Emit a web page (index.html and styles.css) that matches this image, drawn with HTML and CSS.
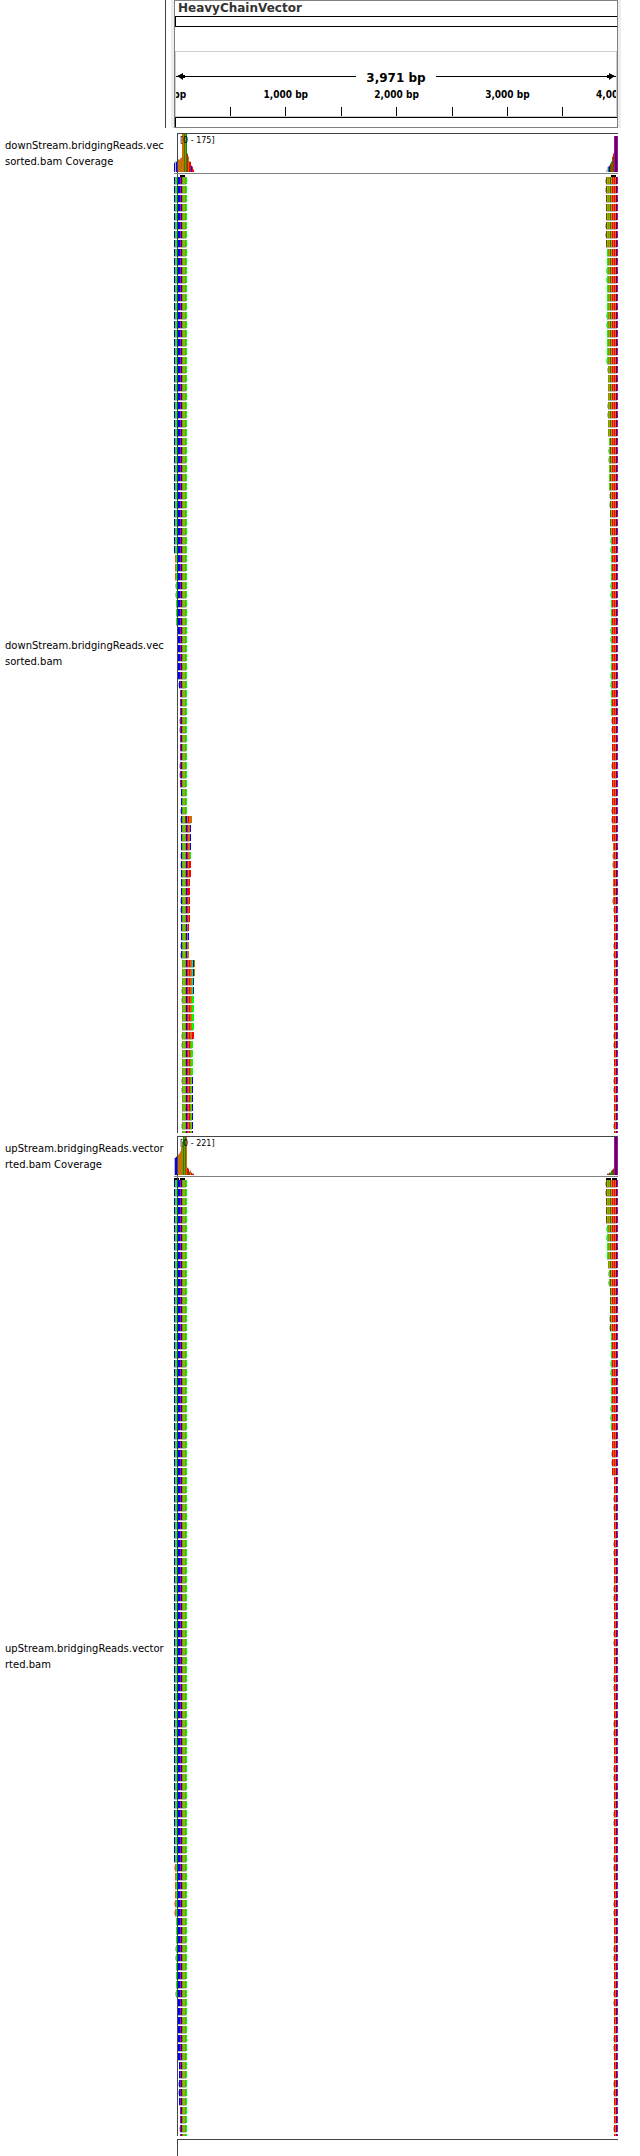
FILE: index.html
```html
<!DOCTYPE html>
<html lang="en">
<head>
<meta charset="utf-8">
<title>HeavyChainVector</title>
<link rel="stylesheet" href="styles.css">
</head>
<body>
<main class="viewer">
  <header class="row header">
    <div class="names divider"></div>
    <section class="locus">
      <h1 class="title">HeavyChainVector</h1>
      <div class="ideogram"></div>
      <div class="ruler">
        <div class="span"><svg class="tip" viewBox="0 0 10 7"><path d="M0 3h10v1H0zM1 3l6-3v2h2v3H7v2z"/></svg><i></i><span>3,971 bp</span><i></i><svg class="tip flip" viewBox="0 0 10 7"><path d="M0 3h10v1H0zM1 3l6-3v2h2v3H7v2z"/></svg></div>
        <div class="scale" id="scale"></div>
      </div>
      <div class="sequence"></div>
    </section>
  </header>
  <section class="row coverage">
    <p class="names">downStream.bridgingReads.vec<br>sorted.bam Coverage</p>
    <div class="plot"><svg class="left" data-cover="downLeft"></svg><span class="range">[0 - 175]</span><svg class="right" data-cover="downRight"></svg></div>
  </section>
  <section class="row reads">
    <p class="names">downStream.bridgingReads.vec<br>sorted.bam</p>
    <div class="plot"><svg class="left" data-reads="downLeft"></svg><svg class="right" data-reads="downRight"></svg></div>
  </section>
  <section class="row coverage">
    <p class="names">upStream.bridgingReads.vector<br>rted.bam Coverage</p>
    <div class="plot"><svg class="left" data-cover="upLeft"></svg><span class="range">[0 - 221]</span><svg class="right" data-cover="upRight"></svg></div>
  </section>
  <section class="row reads">
    <p class="names">upStream.bridgingReads.vector<br>rted.bam</p>
    <div class="plot"><svg class="left" data-reads="upLeft"></svg><svg class="right" data-reads="upRight"></svg></div>
  </section>
  <section class="row footer">
    <div class="names"></div>
    <div class="plot"></div>
  </section>
</main>
<script src="tracks.js"></script>
</body>
</html>
```
FILE: styles.css
```css
body { margin: 0; background: #fff; color: #000; font: 10px/16px "DejaVu Sans", sans-serif; }
.row { display: grid; grid-template-columns: 174px minmax(0, 1fr); padding-right: 22px; }
.names { margin: 0; padding-left: 5px; align-self: center; white-space: nowrap; }
.header { margin-bottom: 5px; padding-right: 19px; }
.divider { align-self: stretch; margin-left: 165px; padding: 0; border-left: 1px solid #444; border-right: 3px solid #eee; }
.locus { display: flex; flex-direction: column; border: 1px solid #808080; box-shadow: 3px 0 #eee; margin-right: 3px; }
.title { margin: 0; padding-left: 3px; height: 15px; font-size: 12px; line-height: 15px; font-weight: bold; color: #333; }
.ideogram { height: 9px; border: solid #000; border-width: 1px 0 1px 1px; }
.ruler { margin-top: 24px; border: 1px solid #ccc; height: 64px; overflow: hidden; display: flex; flex-direction: column; }
.span { display: flex; align-items: center; height: 49px; font-size: 12px; font-weight: bold; }
.span i { flex: 1; height: 1px; background: #000; }
.span span { margin: 0 10px; padding-top: 2px; }
.tip { width: 10px; height: 7px; }
.flip { transform: scaleX(-1); }
.scale { position: relative; height: 30px; margin: -15px 1px 0 -1px; font: bold 10px/16px "DejaVu Sans Condensed", "DejaVu Sans", sans-serif; }
.tick { position: absolute; bottom: 0; width: 60px; margin-left: -30px; text-align: center; white-space: nowrap; display: flex; flex-direction: column; align-items: center; }
.tick::after { content: ""; width: 1px; height: 9px; margin-top: 4px; background: #000; }
.tick:first-child::after { background: none; }
.sequence { height: 9px; border: solid #000; border-width: 1px 0 0 1px; }
.plot { position: relative; display: flex; justify-content: space-between; }
.plot::before { content: ""; position: absolute; top: 0; bottom: 0; left: 3px; width: 1px; background: #444; }
.plot svg { display: block; shape-rendering: crispEdges; }
.coverage { height: 41px; }
.coverage .plot { height: 41px; }
.coverage .plot::before { width: auto; right: 0; background: none; border: solid #444; border-width: 1px 0 0 1px; }
.coverage .plot::after { content: ""; position: absolute; left: 0; right: 0; bottom: 0; height: 1px; background: #808080; }
.left { width: 24px; }
.right { width: 14px; }
.coverage svg { height: 40px; }
.range { position: absolute; left: 6px; top: 1px; font-size: 8px; line-height: 13px; }
.reads { margin-bottom: 3px; }
.reads svg { height: 959px; }
.footer .plot { height: 17px; }
.footer .plot::before { width: auto; right: 0; background: none; border: solid #444; border-width: 1px 0 0 1px; }
```
FILE: tracks.js
```js
const palette = {
  r: '#ff0000', g: '#00ff00', b: '#0000ff', o: '#c87000', d: '#e06020',
  m: '#60c810', n: '#009600', s: '#bbbbbb', k: '#000000'
};

function rect(svg, x, y, w, h, key) {
  const el = document.createElementNS('http://www.w3.org/2000/svg', 'rect');
  el.setAttribute('x', x);
  el.setAttribute('y', y);
  el.setAttribute('width', w);
  el.setAttribute('height', h);
  el.setAttribute('fill', palette[key]);
  svg.appendChild(el);
}

// Each run: [last row, first column, stripes]
const narrow = 'bmgbbbrbdggdg';
const cut = n => narrow.slice(n);
const edge = 'rgomrgrdrobr';
const endCut = n => edge.slice(n);
const reads = {
  downLeft: { x: 0, marks: [[6, 5]], runs: [
    [41, 0, narrow], [44, 1, 'd' + cut(2)], [49, 2, cut(2)], [55, 4, cut(4)], [56, 5, cut(5)],
    [67, 6, cut(6)], [70, 7, cut(7)], [71, 7, 'bdggrbdrooo'], [74, 7, 'bdggdbrodb'],
    [75, 7, 'bdggdbrodg'], [77, 7, 'bdggdbrorr'], [78, 7, 'bdggdbror'], [79, 7, 'bdggdbrrr'],
    [82, 7, 'bdggdbror'], [83, 7, 'bdggdbor'], [84, 7, 'bdggdbob'], [86, 7, 'bdggdboo'],
    [88, 8, 'dggdbrorodgbo'], [90, 8, 'dggdbrorodgb'], [94, 8, 'dggdbrorodgg'],
    [95, 8, 'dggdbrorodrr'], [99, 8, 'dggdbrorogg'], [106, 8, 'dggdbrorogb']] },
  upLeft: { x: 0, marks: [[0, 5], [6, 5]], runs: [
    [75, 0, narrow], [81, 1, 'd' + cut(2)], [90, 2, cut(2)], [97, 4, cut(4)], [102, 5, cut(5)], [106, 6, cut(6)]] },
  downRight: { x: 2, marks: [[5, 5]], runs: [
    [7, 0, edge], [20, 1, endCut(1)], [28, 2, endCut(2)], [34, 3, endCut(3)], [39, 4, endCut(4)],
    [59, 5, endCut(5)], [73, 6, endCut(6)], [80, 7, endCut(7)], [106, 8, endCut(8)]] },
  upRight: { x: 2, marks: [[0, 5], [6, 5]], runs: [
    [4, 0, edge], [8, 1, endCut(1)], [9, 2, endCut(2)], [11, 3, endCut(3)], [16, 4, endCut(4)],
    [27, 5, endCut(5)], [32, 6, endCut(6)], [106, 8, endCut(8)]] }
};

document.querySelectorAll('[data-reads]').forEach(svg => {
  const track = reads[svg.dataset.reads];
  track.marks.forEach(([x, w]) => rect(svg, x + track.x, 1, w, 2, 'k'));
  let row = 0;
  track.runs.forEach(([last, start, stripes]) => {
    for (; row <= last; row++) {
      const x = start + track.x;
      const y = 3 + row * 9;
      if (x > 0 && row % 5 < 2) rect(svg, x - 1, y + 2, 1, 4, 's');
      [...stripes].forEach((key, i) => rect(svg, x + i, y, 1, 7, key));
      if (row < 106) rect(svg, x, y + 7, stripes.length - 1, 1, 's');
    }
  });
});

// Bar heights above the baseline with one colour key per column
const cover = {
  downLeft: { x: 0, h: [9, 10, 10, 11, 12, 12, 13, 14, 38, 38, 38, 38, 38, 18, 15, 10, 10, 6, 5, 2], c: 'bsbooooooononrorrbrr' },
  downRight: { x: 2, h: [1, 4, 5, 6, 8, 10, 15, 18, 36, 36, 36, 36], c: 'ssnbrnnrrbbr' },
  upLeft: { x: 0, h: [16, 17, 18, 19, 20, 21, 23, 27, 33, 38, 38, 38, 38, 7, 6, 3, 4, 2, 1, 1], c: 'sbboooooononorrnorrr' },
  upRight: { x: 2, h: [0, 1, 1, 2, 2, 4, 5, 6, 38, 38, 38, 38], c: 'snnrnnnrrbbr' }
};

document.querySelectorAll('[data-cover]').forEach(svg => {
  const data = cover[svg.dataset.cover];
  data.h.forEach((h, i) => {
    rect(svg, data.x + i, 39 - h - (h < 36 ? 1 : 0), 1, h, 's');
    rect(svg, data.x + i, 39 - h, 1, h, data.c[i]);
  });
});

const scale = document.getElementById('scale');
for (let bp = 0; bp <= 4000; bp += 500) {
  const tick = document.createElement('div');
  tick.className = 'tick';
  tick.style.left = (bp / 3971 * 100) + '%';
  tick.textContent = bp % 1000 ? '' : bp.toLocaleString('en-US') + ' bp';
  scale.appendChild(tick);
}
```
